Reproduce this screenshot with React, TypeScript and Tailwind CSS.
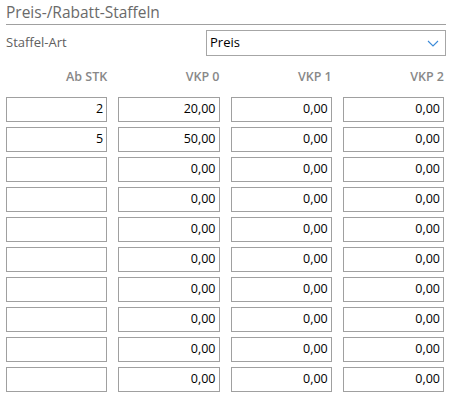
import React from "react";

const rows = [
  ["2", "20,00", "0,00", "0,00"],
  ["5", "50,00", "0,00", "0,00"],
  ["", "0,00", "0,00", "0,00"],
  ["", "0,00", "0,00", "0,00"],
  ["", "0,00", "0,00", "0,00"],
  ["", "0,00", "0,00", "0,00"],
  ["", "0,00", "0,00", "0,00"],
  ["", "0,00", "0,00", "0,00"],
  ["", "0,00", "0,00", "0,00"],
  ["", "0,00", "0,00", "0,00"],
];

const headers = ["Ab STK", "VKP 0", "VKP 1", "VKP 2"];

const App = () => {
  return (
    <div className="w-[453px] h-[400px] bg-white pl-[6px] pr-[7px] font-['Open_Sans',sans-serif] overflow-hidden">
      <div className="h-[25px] border-b border-[#a0a0a0] flex items-end pb-[1px]">
        <h1 className="text-[15.5px] leading-[21px] text-[#6a6a6a]">
          Preis-/Rabatt-Staffeln
        </h1>
      </div>

      <div className="mt-[5px] flex items-center h-[26px]">
        <label className="w-[200px] text-[13px] text-[#606060]">Staffel-Art</label>
        <div className="flex-1 h-full border border-[#a6a6a6] flex items-center justify-between pl-[3px] pr-[6px]">
          <span className="text-[13px] text-black">Preis</span>
          <svg width="12" height="7" viewBox="0 0 12 7" fill="none">
            <polyline points="1,1 6,6 11,1" stroke="#3b8ad8" strokeWidth="1.1" />
          </svg>
        </div>
      </div>

      <div className="grid grid-cols-4 gap-x-[11px] mt-[12px] pr-[2px]">
        {headers.map((h) => (
          <div key={h} className="text-right text-[12.5px] leading-[17px] font-semibold text-[#888888]">
            {h}
          </div>
        ))}
      </div>

      <div className="grid grid-cols-4 gap-x-[11px] gap-y-[5px] mt-[12px] pr-[2px]">
        {rows.flatMap((r, i) =>
          r.map((v, j) => (
            <div
              key={`${i}-${j}`}
              className="h-[25px] border border-[#a0a0a0] flex items-center justify-end pr-[3px] text-[12.5px] text-black"
            >
              {v}
            </div>
          ))
        )}
      </div>
    </div>
  );
};

export default App;
